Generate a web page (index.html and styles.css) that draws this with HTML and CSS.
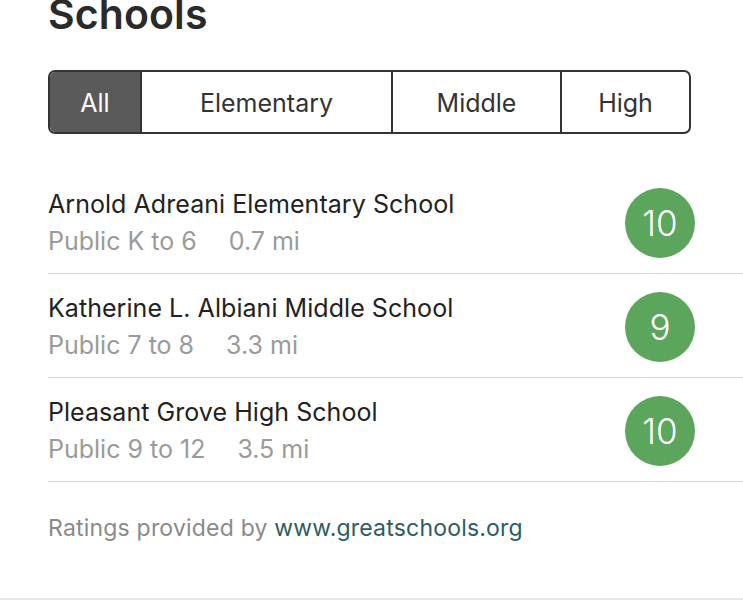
FILE: index.html
```html
<!DOCTYPE html>
<html>
<head>
<meta charset="utf-8">
<link rel="stylesheet" href="styles.css">
</head>
<body>
<div class="page">
  <h1 class="title">Schools</h1>
  <div class="seg">
    <div class="seg-item seg-active">All</div>
    <div class="seg-item">Elementary</div>
    <div class="seg-item">Middle</div>
    <div class="seg-item">High</div>
  </div>
  <ul class="list">
    <li class="row">
      <div class="info">
        <div class="name">Arnold Adreani Elementary School</div>
        <div class="meta"><span>Public K to 6</span><span>0.7 mi</span></div>
      </div>
      <div class="rating">10</div>
    </li>
    <li class="row">
      <div class="info">
        <div class="name">Katherine L. Albiani Middle School</div>
        <div class="meta"><span>Public 7 to 8</span><span>3.3 mi</span></div>
      </div>
      <div class="rating">9</div>
    </li>
    <li class="row">
      <div class="info">
        <div class="name">Pleasant Grove High School</div>
        <div class="meta"><span>Public 9 to 12</span><span>3.5 mi</span></div>
      </div>
      <div class="rating">10</div>
    </li>
  </ul>
  <p class="credit">Ratings provided by <a class="link" href="#">www.greatschools.org</a></p>
</div>
<div class="next"></div>
</body>
</html>
```

FILE: styles.css
```css
* { box-sizing: border-box; }
html, body { margin: 0; padding: 0; background: #fff; }
body {
  font-family: Inter, "Noto Sans", Roboto, sans-serif;
  color: #222;
  width: 743px;
  height: 600px;
  overflow: hidden;
}
.page {
  display: flow-root;
  padding-left: 48px;
  height: 598px;
}
.title {
  margin: -11px 0 0 0;
  font-size: 41px;
  line-height: 50px;
  font-weight: 600;
  color: #2a2a2a;
  letter-spacing: 0.1px;
}
.seg {
  margin-top: 31px;
  width: 643px;
  height: 64px;
  display: grid;
  grid-template-columns: 90px 251px 169px 1fr;
  border: 2px solid #333;
  border-radius: 7px;
  overflow: hidden;
}
.seg-item {
  display: flex;
  align-items: center;
  justify-content: center;
  font-size: 25px;
  color: #333;
  border-left: 2px solid #333;
  padding-top: 1px;
}
.seg-item:first-child { border-left: none; }
.seg-active {
  background: #5a5a5a;
  color: #fff;
}
.list {
  list-style: none;
  margin: 36px 0 0 0;
  padding: 0;
}
.row {
  display: flex;
  align-items: center;
  justify-content: space-between;
  padding: 18px 48px 17px 0;
  border-bottom: 1.5px solid #dcdcdc;
  height: 104px;
}
.info {
  display: flex;
  flex-direction: column;
  gap: 7px;
}
.name {
  font-size: 25px;
  line-height: 30px;
  color: #222;
  letter-spacing: 0.05px;
}
.meta {
  font-size: 25px;
  line-height: 30px;
  color: #9a9a9a;
  display: flex;
  gap: 32px;
}
.rating {
  width: 70px;
  height: 70px;
  border-radius: 50%;
  background: #5ca55c;
  color: #fff;
  font-size: 35px;
  font-weight: 300;
  display: flex;
  align-items: center;
  justify-content: center;
  margin-top: 2px;
}
.credit {
  margin: 31px 0 0 0;
  font-size: 23px;
  line-height: 30px;
  color: #8a8a8a;
  letter-spacing: 0.2px;
}
.link {
  color: #2c5d63;
  text-decoration: none;
}
.next {
  border-top: 2px solid #e6e6e6;
  height: 2px;
}
```
